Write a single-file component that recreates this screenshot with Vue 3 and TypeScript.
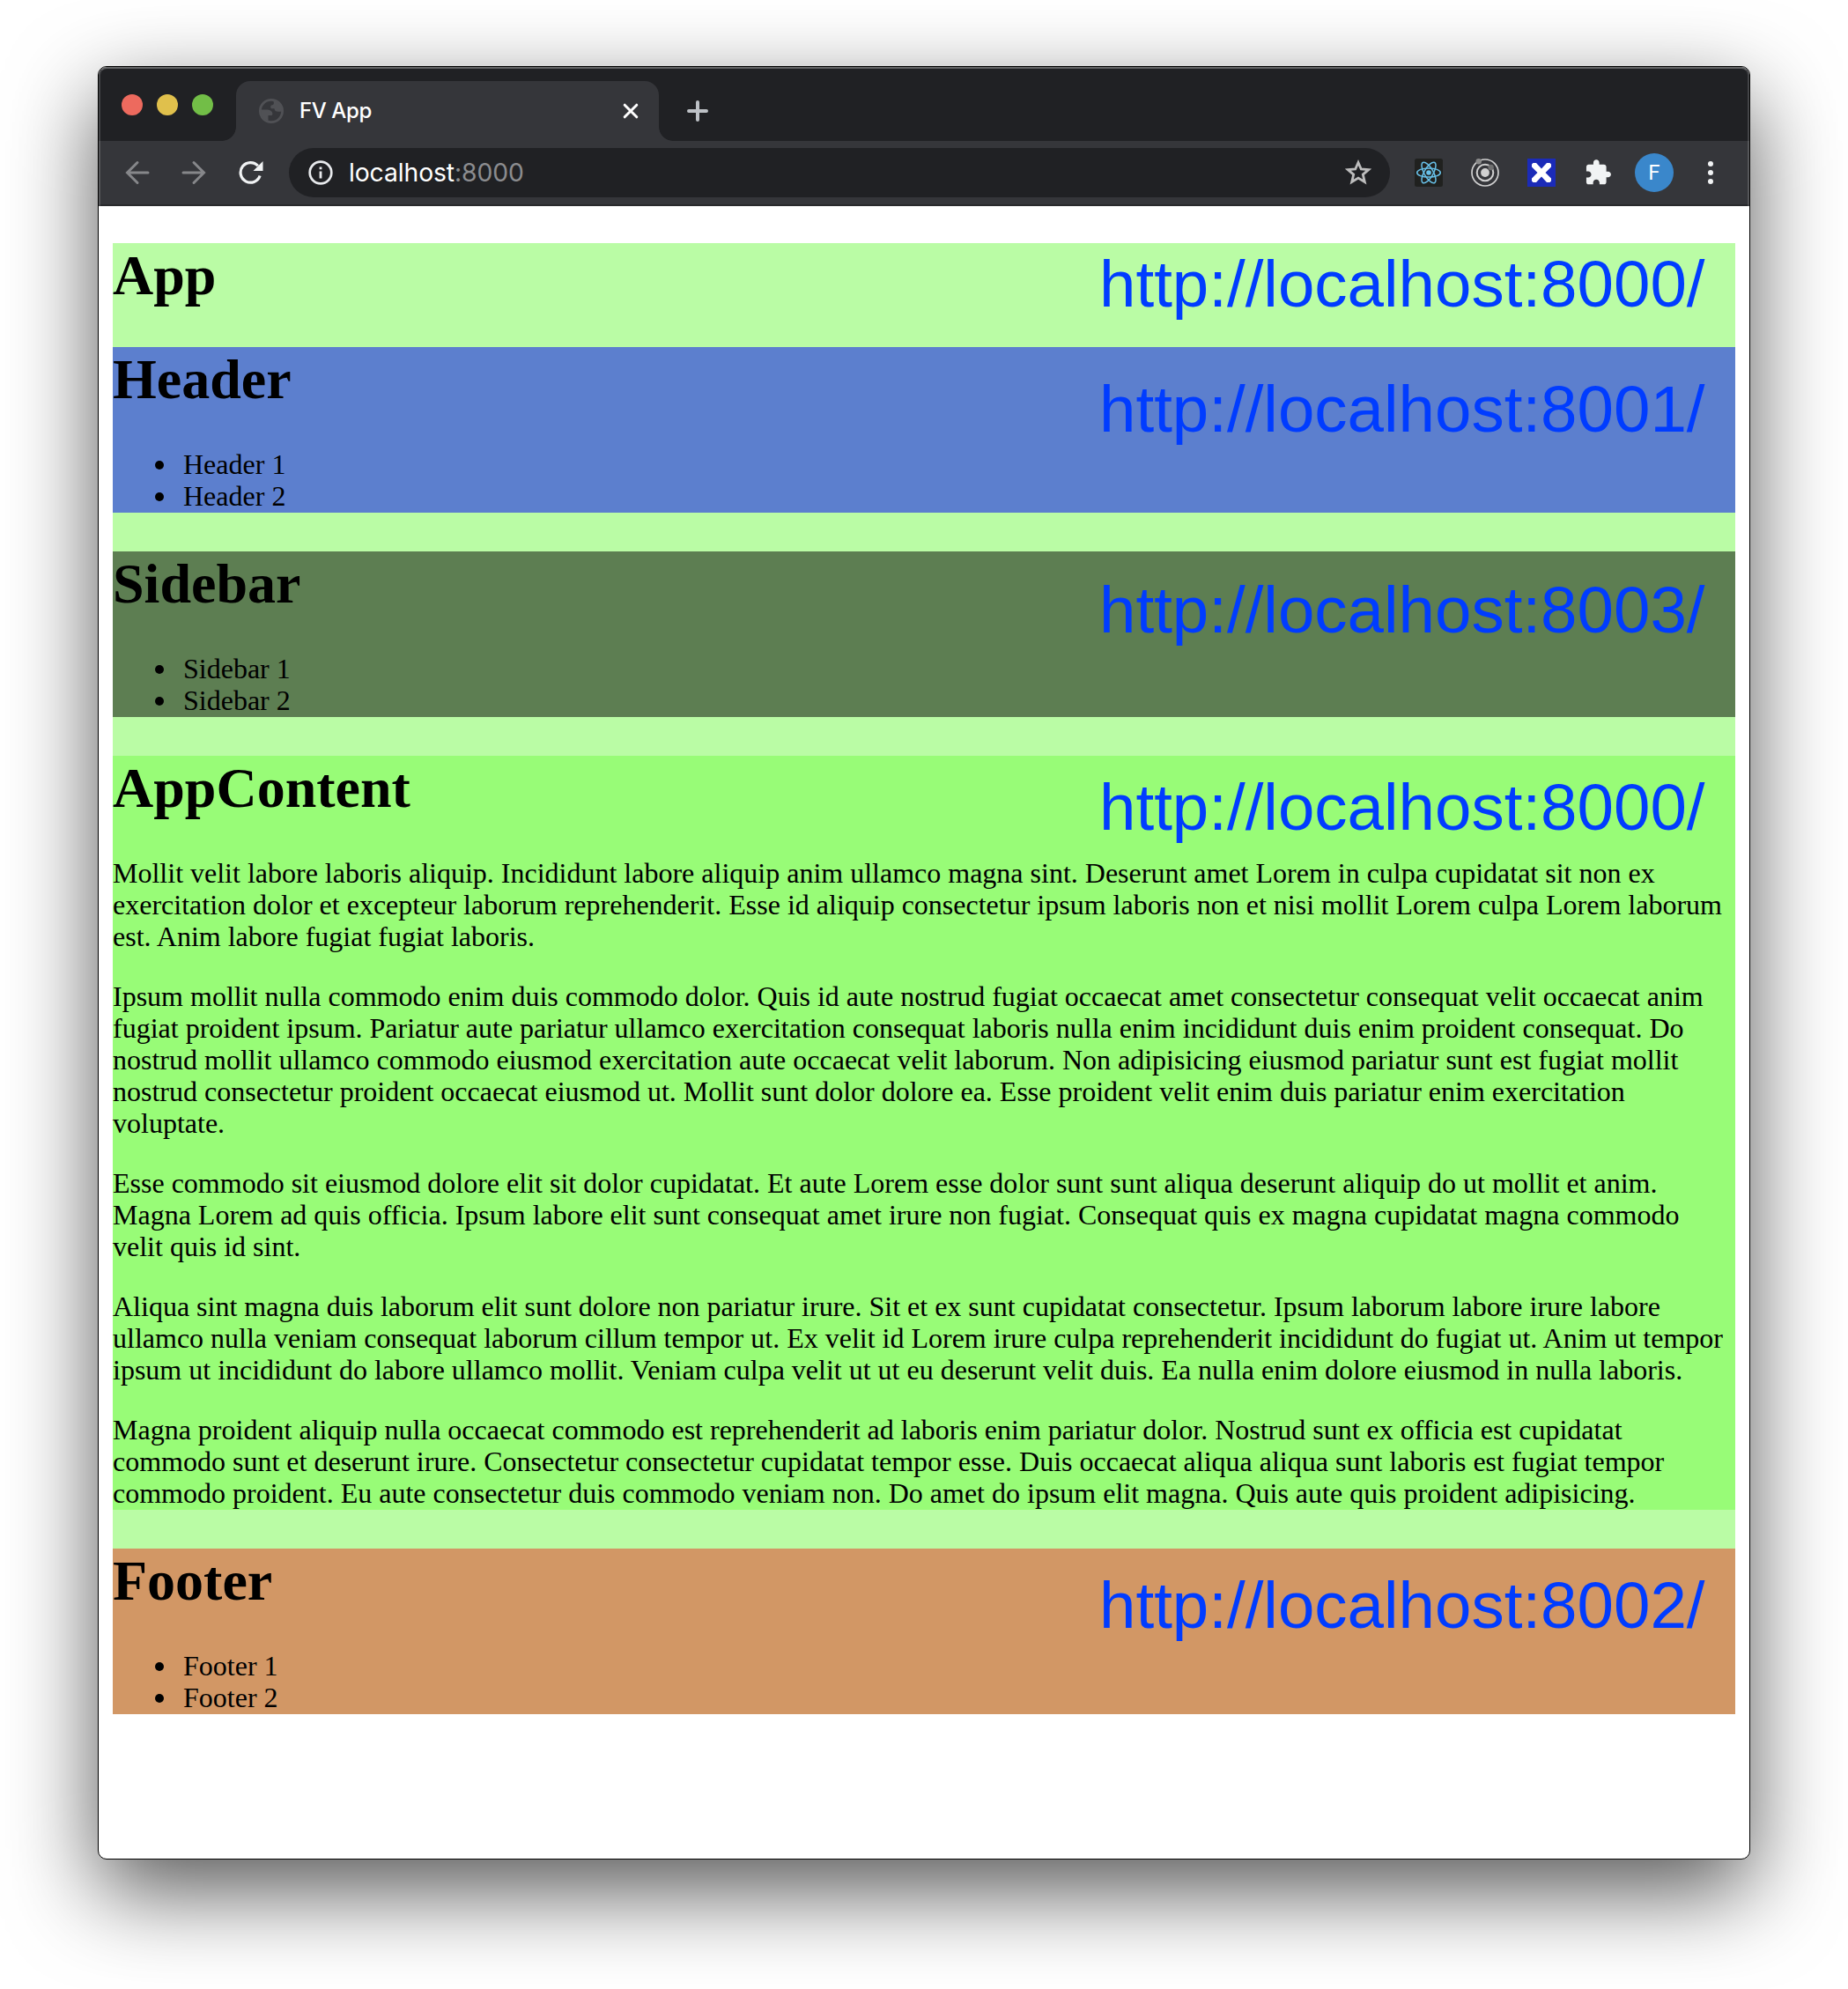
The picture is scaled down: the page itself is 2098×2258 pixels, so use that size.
<script setup lang="ts">
interface Section {
  id: string
  title: string
  url: string
  items?: string[]
  paragraphs?: string[][]
}

const sections: Section[] = [
  { id: 'header', title: 'Header', url: 'http://localhost:8001/', items: ['Header 1', 'Header 2'] },
  { id: 'sidebar', title: 'Sidebar', url: 'http://localhost:8003/', items: ['Sidebar 1', 'Sidebar 2'] },
  {
    id: 'content',
    title: 'AppContent',
    url: 'http://localhost:8000/',
    paragraphs: [
      [
        'Mollit velit labore laboris aliquip. Incididunt labore aliquip anim ullamco magna sint. Deserunt amet Lorem in culpa cupidatat sit non ex',
        'exercitation dolor et excepteur laborum reprehenderit. Esse id aliquip consectetur ipsum laboris non et nisi mollit Lorem culpa Lorem laborum',
        'est. Anim labore fugiat fugiat laboris.',
      ],
      [
        'Ipsum mollit nulla commodo enim duis commodo dolor. Quis id aute nostrud fugiat occaecat amet consectetur consequat velit occaecat anim',
        'fugiat proident ipsum. Pariatur aute pariatur ullamco exercitation consequat laboris nulla enim incididunt duis enim proident consequat. Do',
        'nostrud mollit ullamco commodo eiusmod exercitation aute occaecat velit laborum. Non adipisicing eiusmod pariatur sunt est fugiat mollit',
        'nostrud consectetur proident occaecat eiusmod ut. Mollit sunt dolor dolore ea. Esse proident velit enim duis pariatur enim exercitation',
        'voluptate.',
      ],
      [
        'Esse commodo sit eiusmod dolore elit sit dolor cupidatat. Et aute Lorem esse dolor sunt sunt aliqua deserunt aliquip do ut mollit et anim.',
        'Magna Lorem ad quis officia. Ipsum labore elit sunt consequat amet irure non fugiat. Consequat quis ex magna cupidatat magna commodo',
        'velit quis id sint.',
      ],
      [
        'Aliqua sint magna duis laborum elit sunt dolore non pariatur irure. Sit et ex sunt cupidatat consectetur. Ipsum laborum labore irure labore',
        'ullamco nulla veniam consequat laborum cillum tempor ut. Ex velit id Lorem irure culpa reprehenderit incididunt do fugiat ut. Anim ut tempor',
        'ipsum ut incididunt do labore ullamco mollit. Veniam culpa velit ut ut eu deserunt velit duis. Ea nulla enim dolore eiusmod in nulla laboris.',
      ],
      [
        'Magna proident aliquip nulla occaecat commodo est reprehenderit ad laboris enim pariatur dolor. Nostrud sunt ex officia est cupidatat',
        'commodo sunt et deserunt irure. Consectetur consectetur cupidatat tempor esse. Duis occaecat aliqua aliqua sunt laboris est fugiat tempor',
        'commodo proident. Eu aute consectetur duis commodo veniam non. Do amet do ipsum elit magna. Quis aute quis proident adipisicing.',
      ],
    ],
  },
  { id: 'footer', title: 'Footer', url: 'http://localhost:8002/', items: ['Footer 1', 'Footer 2'] },
]
</script>

<template>
  <div class="desktop">
    <div class="window">
      <div class="tabstrip">
        <div class="lights"><i class="red"></i><i class="yellow"></i><i class="green"></i></div>
        <div class="tab">
          <svg class="globe" width="28" height="28" viewBox="0 0 28 28">
            <circle cx="14" cy="14" r="12.600" fill="none" stroke="#505155" stroke-width="2.800" />
            <path d="M2 12.400H8.500C12.500 12.400 15.400 14.200 15.400 17.200C15.400 18.500 14.500 19 13.200 19H10.500V25.500C5 24 2 18.500 2 12.400Z" fill="#505155" />
            <path d="M15.500 2C17.500 4 17.500 6.800 15 7.200C13.200 7.500 13.200 8.500 13.200 10C13.200 11 14 11.300 15 11.300H17.500C17.800 14.500 20 15.400 26 14.400C26.500 8 22 2.500 15.500 2Z" fill="#505155" />
          </svg>
          <span class="tab-title">FV App</span>
          <svg class="close" width="18" height="18" viewBox="0 0 18 18">
            <path d="M2.200 2.200L15.800 15.800M15.800 2.200L2.200 15.800" stroke="#fff" stroke-width="3" stroke-linecap="round" />
          </svg>
        </div>
        <svg class="plus" width="24" height="24" viewBox="0 0 24 24">
          <path d="M12 2V22M2 12H22" stroke="#bdc1c6" stroke-width="4" stroke-linecap="round" />
        </svg>
      </div>

      <div class="toolbar">
        <svg class="back" width="28" height="28" viewBox="0 0 28 28" fill="none" stroke="#86878a" stroke-width="3">
          <path d="M26 14H3M14 2.500L2.500 14L14 25.500" stroke-linecap="round" />
        </svg>
        <svg class="forward" width="28" height="28" viewBox="0 0 28 28" fill="none" stroke="#86878a" stroke-width="3">
          <path d="M2 14H25M14 2.500L25.500 14L14 25.500" stroke-linecap="round" />
        </svg>
        <svg class="reload" width="28" height="28" viewBox="0 0 28 28">
          <path d="M24.100 17.500A11.300 11.300 0 1 1 21.800 6.300" fill="none" stroke="#f1f3f4" stroke-width="3.200" />
          <path d="M27.500 1V12H16.500Z" fill="#f1f3f4" />
        </svg>
        <div class="omnibox">
          <svg class="info" width="28" height="28" viewBox="0 0 28 28">
            <circle cx="14" cy="14" r="12.300" fill="none" stroke="#e8eaed" stroke-width="2.700" />
            <path d="M12.600 12.500H15.400V20.500H12.600ZM12.600 7.500H15.400V10.200H12.600Z" fill="#e8eaed" />
          </svg>
          <span class="address">localhost<span class="port">:8000</span></span>
          <svg class="star" width="30" height="30" viewBox="0 0 30 30">
            <path d="M15 3.500L18.300 11L26.600 11.700L20.300 17.100L22.300 25.500L15 21.100L7.700 25.500L9.700 17.100L3.400 11.700L11.700 11Z" fill="none" stroke="#bdbdbd" stroke-width="2.800" />
          </svg>
        </div>
        <svg class="react" width="32" height="32" viewBox="0 0 32 32">
          <rect width="32" height="32" rx="2.500" fill="#20211f" />
          <g fill="none" stroke="#68c0e8" stroke-width="1.500">
            <ellipse cx="16" cy="16" rx="13.300" ry="5.100" />
            <ellipse cx="16" cy="16" rx="13.300" ry="5.100" transform="rotate(60 16 16)" />
            <ellipse cx="16" cy="16" rx="13.300" ry="5.100" transform="rotate(120 16 16)" />
          </g>
          <circle cx="16" cy="16" r="2.800" fill="#68c0e8" />
        </svg>
        <svg class="orbit" width="32" height="32" viewBox="0 0 32 32">
          <g fill="none" stroke="#d0d0d0">
            <circle cx="16" cy="16" r="15" stroke-width="1.700" />
            <circle cx="16" cy="16" r="9.300" stroke-width="2" />
          </g>
          <circle cx="16" cy="16" r="4.900" fill="#d0d0d0" />
          <circle cx="8.700" cy="3.300" r="3.200" fill="#8b8b8b" />
          <circle cx="22.600" cy="10" r="3.200" fill="#707070" />
        </svg>
        <svg class="cross" width="32" height="32" viewBox="0 0 32 32">
          <rect width="32" height="32" fill="#1b2bb8" />
          <path d="M5 6.500L6.500 5H10L16 11.500L22 5H25.500L27 6.500V9.500L20.500 16L27 22.500V25.500L25.500 27H22L16 20.500L10 27H6.500L5 25.500V22.500L11.500 16L5 9.500Z" fill="#fff" />
        </svg>
        <svg class="puzzle" width="32" height="32" viewBox="1 1 24 24">
          <path d="M20.500 11H19V7c0-1.100-.9-2-2-2h-4V3.500C13 2.120 11.880 1 10.500 1S8 2.120 8 3.500V5H4c-1.100 0-1.990.9-1.990 2v3.800H3.500c1.490 0 2.700 1.210 2.700 2.700s-1.210 2.700-2.700 2.700H2V20c0 1.100.9 2 2 2h3.800v-1.500c0-1.490 1.210-2.700 2.700-2.700 1.490 0 2.700 1.210 2.700 2.700V22H17c1.100 0 2-.9 2-2v-4h1.500c1.380 0 2.500-1.120 2.500-2.500S21.880 11 20.500 11z" transform="translate(1.200 1)" fill="#f1f3f4" />
        </svg>
        <div class="avatar">F</div>
        <svg class="menu" width="6" height="28" viewBox="0 0 6 28" fill="#f1f3f4">
          <circle cx="3" cy="4" r="3" /><circle cx="3" cy="14" r="3" /><circle cx="3" cy="24" r="3" />
        </svg>
      </div>

      <main class="page">
        <div class="app">
          <h1>App</h1>
          <span class="url url-app">http://localhost:8000/</span>
          <section v-for="s in sections" :key="s.id" :class="['part', s.id]">
            <h1>{{ s.title }}</h1>
            <span class="url">{{ s.url }}</span>
            <ul v-if="s.items">
              <li v-for="item in s.items" :key="item">{{ item }}</li>
            </ul>
            <p v-for="(lines, i) in s.paragraphs" :key="i">
              <span v-for="line in lines" :key="line" class="line">{{ line }}</span>
            </p>
          </section>
        </div>
      </main>
    </div>
  </div>
</template>

<style>
body {
  margin: 0;
  background: #fff;
}
</style>

<style scoped>
.desktop {
  box-sizing: border-box;
  width: 2098px;
  height: 2258px;
  padding: 75px 111px 0;
  overflow: hidden;
}
.window {
  position: relative;
  box-sizing: border-box;
  width: 1876px;
  height: 2036px;
  border: 1px solid #000;
  border-radius: 10px;
  background: #fff;
  box-shadow: 0 36px 100px rgba(0, 0, 0, 0.66);
}
.window::after {
  content: '';
  position: absolute;
  left: 0;
  right: 0;
  top: 0;
  height: 158px;
  box-sizing: border-box;
  border: 2px solid rgba(255, 255, 255, 0.16);
  border-top-color: rgba(255, 255, 255, 0.3);
  border-bottom: 0;
  border-radius: 9px 9px 0 0;
  pointer-events: none;
}
.tabstrip {
  display: flex;
  height: 84px;
  background: #202124;
  border-radius: 9px 9px 0 0;
}
.lights {
  display: flex;
  gap: 16px;
  width: 130px;
  padding: 31px 0 0 26px;
}
.lights i {
  width: 24px;
  height: 24px;
  border-radius: 50%;
}
.red { background: #ed6a5e; }
.yellow { background: #e0c04c; }
.green { background: #72be47; }
.tab {
  position: relative;
  box-sizing: border-box;
  display: flex;
  align-items: center;
  width: 480px;
  height: 68px;
  margin-top: 16px;
  padding: 0 23px 0 26px;
  border-radius: 16px 16px 0 0;
  background: #35363a;
}
.tab::before,
.tab::after {
  content: '';
  position: absolute;
  bottom: 0;
  width: 16px;
  height: 16px;
}
.tab::before {
  right: 100%;
  background: radial-gradient(circle at 0 0, transparent 15.500px, #35363a 16.200px);
}
.tab::after {
  left: 100%;
  background: radial-gradient(circle at 100% 0, transparent 15.500px, #35363a 16.200px);
}
.tab-title {
  margin-left: 18px;
  font: 500 24px/28px Inter, sans-serif;
  letter-spacing: -0.400px;
  color: #fff;
}
.close {
  margin-left: auto;
}
.plus {
  margin: 38px 0 0 32px;
}
.toolbar {
  box-sizing: border-box;
  display: flex;
  align-items: center;
  height: 74px;
  padding-left: 30px;
  background: #35363a;
  border-bottom: 2px solid #28292c;
}
.forward { margin-left: 36px; }
.reload { margin-left: 37px; }
.omnibox {
  display: flex;
  align-items: center;
  box-sizing: border-box;
  width: 1250px;
  height: 56px;
  margin-left: 29px;
  padding: 0 21px 0 22px;
  border-radius: 28px;
  background: #202124;
}
.address {
  margin-left: 18px;
  font: 400 28.300px/34px Inter, sans-serif;
  letter-spacing: -0.100px;
  color: #fff;
}
.port { color: #8b8c8f; }
.star { margin-left: auto; }
.react { margin-left: 28px; }
.orbit { margin-left: 32px; }
.cross { margin-left: 32px; }
.puzzle { margin-left: 32px; }
.avatar {
  width: 44px;
  height: 44px;
  margin-left: 26px;
  border-radius: 50%;
  background: #3a87cb;
  color: #fff;
  font: 400 24px/45px Roboto, sans-serif;
  text-align: center;
}
.menu { margin-left: 39px; }
.page {
  padding: 42px 16px 0;
  font: 32px/36px 'Liberation Serif', 'Times New Roman', serif;
  color: #000;
}
.app {
  position: relative;
  display: flex;
  flex-direction: column;
  gap: 44px;
  background: #bafca5;
}
h1 {
  margin: 0;
  font-size: 64px;
  line-height: 74px;
  font-weight: 700;
}
.part {
  position: relative;
  display: flow-root;
}
.header { background: #5c7fce; }
.sidebar { background: #5d7e52; }
.content { background: #98fc77; }
.footer { background: #d29765; }
ul {
  margin: 41px 0 0;
  padding: 0 0 1px 48px;
  list-style: none;
}
li {
  display: flex;
  align-items: center;
}
li::before {
  content: '';
  width: 10px;
  height: 10px;
  margin: 2px 22px 0 0;
  border-radius: 50%;
  background: #000;
}
p {
  margin: 41px 0 0;
}
p + p {
  margin-top: 32px;
}
p:last-child {
  padding-bottom: 1px;
}
.line {
  display: block;
  white-space: nowrap;
}
.url {
  position: absolute;
  left: 1120px;
  font: 74.500px/86px 'Liberation Sans', Arial, sans-serif;
  color: #003cff;
}
.url-app { top: 4px; }
.header .url { top: 28px; }
.sidebar .url { top: 24px; }
.content .url { top: 16px; }
.footer .url { top: 22px; }
</style>
